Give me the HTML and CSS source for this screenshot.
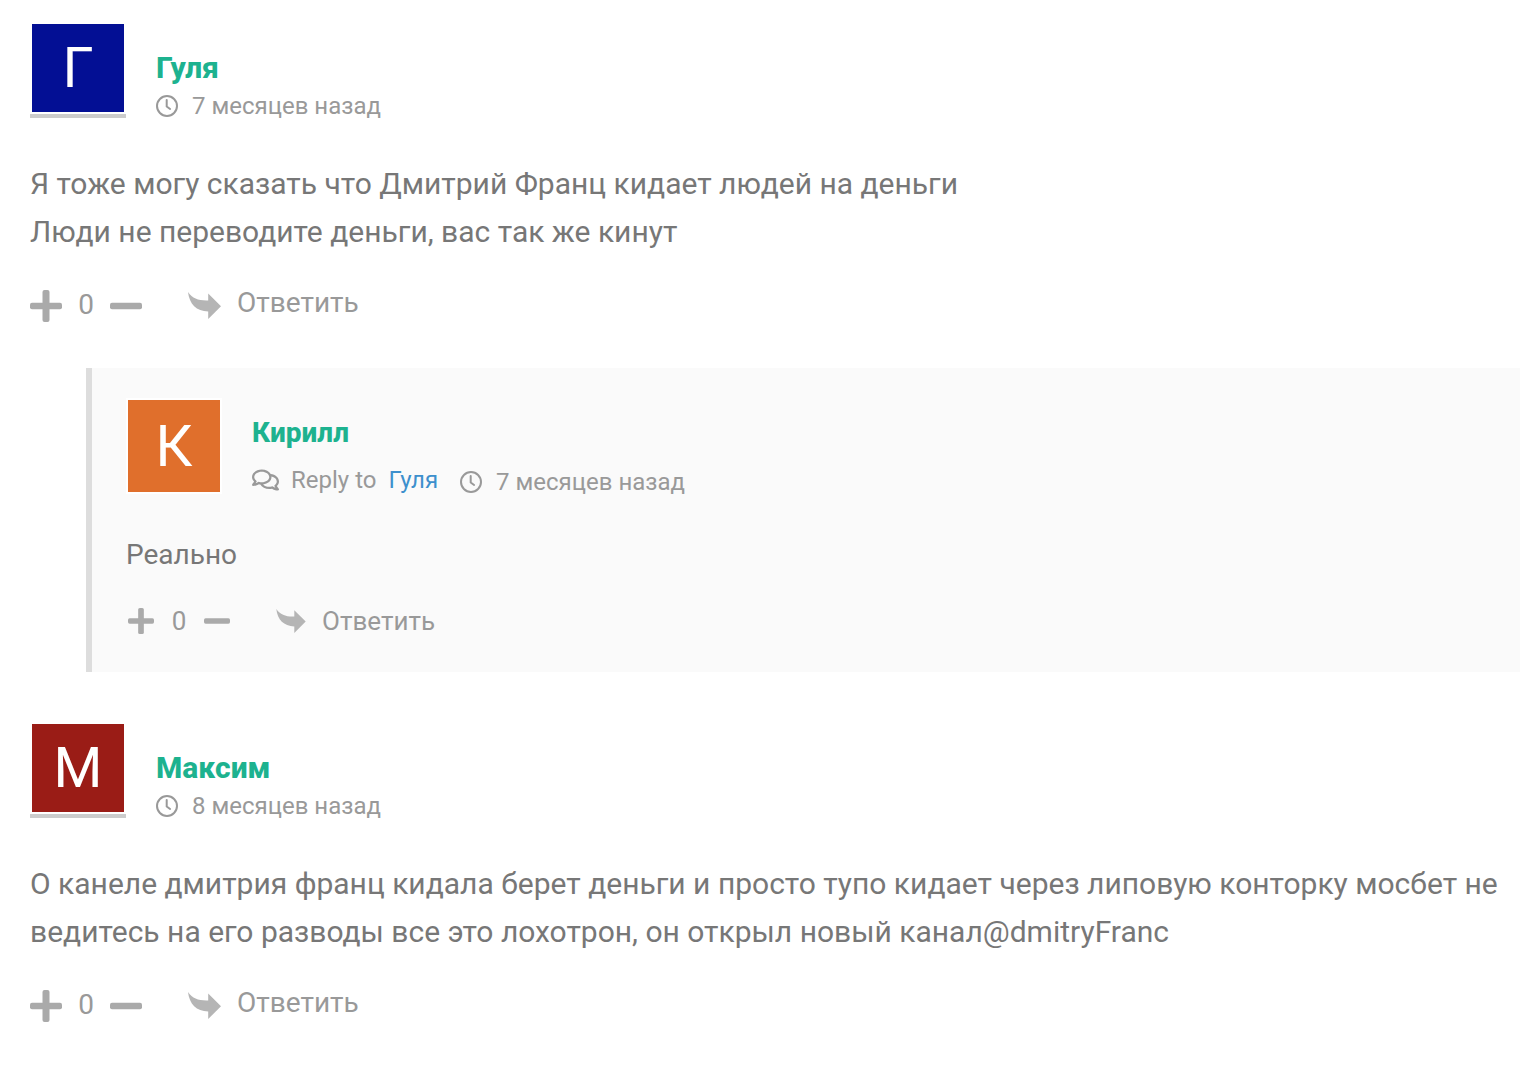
FILE: index.html
```html
<!DOCTYPE html>
<html lang="ru">
<head>
  <meta charset="UTF-8">
  <meta name="viewport" content="width=device-width, initial-scale=1.0">
  <title>Комментарии</title>
  <link rel="stylesheet" href="styles.css">
</head>
<body>
  <!-- Иконки -->
  <svg class="sprite" aria-hidden="true">
    <symbol id="clock" viewBox="0 0 22 22">
      <circle cx="11" cy="11" r="10" fill="none" stroke="currentColor" stroke-width="2"/>
      <path d="M10.700 5v6.500l3.400 2.500" fill="none" stroke="currentColor" stroke-width="2" stroke-linecap="round" stroke-linejoin="round"/>
    </symbol>
    <symbol id="talk" viewBox="0 32 576 448">
      <path d="M532 386.2c27.5-27.1 44-61.1 44-98.2 0-80-76.5-146.1-176.2-157.9C368.3 72.5 294.3 32 208 32 93.1 32 0 103.6 0 192c0 37 16.5 71 44 98.2-15.3 30.7-37.3 54.5-37.7 54.9-6.3 6.7-8.1 16.5-4.4 25 3.6 8.5 12 14 21.2 14 53.5 0 96.7-20.2 125.2-38.8 9.2 2.1 18.7 3.7 28.4 4.9C208.1 407.6 281.8 448 368 448c20.8 0 40.8-2.4 59.8-6.8C456.3 459.7 499.4 480 553 480c9.2 0 17.5-5.5 21.2-14 3.6-8.5 1.9-18.3-4.4-25-.4-.3-22.5-24.1-37.8-54.8zm-392.8-92.3L122.1 305c-14.1 9.1-28.5 16.3-43.1 21.4 2.7-4.7 5.4-9.7 8-14.8l15.5-31.1L77.7 256C64.2 242.6 48 220.7 48 192c0-60.7 73.3-112 160-112s160 51.3 160 112-73.3 112-160 112c-16.5 0-33-1.9-49-5.6l-19.8-4.5zM498.3 352l-24.7 24.4 15.5 31.1c2.6 5.1 5.3 10.1 8 14.8-14.6-5.1-29-12.3-43.1-21.4l-17.1-11.1-19.9 4.6c-16 3.7-32.5 5.6-49 5.6-54 0-102.2-20.1-131.3-49.7C338 339.5 416 272.9 416 192c0-3.4-.4-6.7-.7-10C479.7 196.5 528 238.8 528 288c0 28.7-16.2 50.6-29.7 64z"/>
    </symbol>
    <symbol id="plus" viewBox="0 0 32 32">
      <rect y="12.7" width="32" height="6.6" rx="2"/>
      <rect x="12.5" width="7" height="32" rx="2"/>
    </symbol>
    <symbol id="minus" viewBox="0 0 32 32">
      <rect y="12.7" width="32" height="6.6" rx="2"/>
    </symbol>
    <symbol id="arrow" viewBox="0 0 98 80">
      <path d="M0 0c14 20 32 26 60 25V4l38 38-38 38V58C25 57 4 36 0 0z"/>
    </symbol>
  </svg>

  <main class="comments">
    <article class="comment">
      <header class="comment-head">
        <div class="avatar"><span class="avatar-letter blue">Г</span></div>
        <div class="info">
          <h3 class="author">Гуля</h3>
          <div class="meta">
            <span class="date"><svg class="icon-clock"><use href="#clock"/></svg>7 месяцев назад</span>
          </div>
        </div>
      </header>
      <p class="text">Я тоже могу сказать что Дмитрий Франц кидает людей на деньги<br>Люди не переводите деньги, вас так же кинут</p>
      <footer class="actions">
        <button class="vote" type="button" aria-label="Плюс"><svg><use href="#plus"/></svg></button>
        <span class="count">0</span>
        <button class="vote" type="button" aria-label="Минус"><svg><use href="#minus"/></svg></button>
        <button class="answer" type="button"><svg><use href="#arrow"/></svg>Ответить</button>
      </footer>
    </article>

    <article class="comment reply">
      <header class="comment-head">
        <div class="avatar"><span class="avatar-letter orange">К</span></div>
        <div class="info">
          <h3 class="author">Кирилл</h3>
          <div class="meta">
            <span class="reply-to"><svg class="icon-talk"><use href="#talk"/></svg>Reply to <a href="#">Гуля</a></span>
            <span class="date"><svg class="icon-clock"><use href="#clock"/></svg>7 месяцев назад</span>
          </div>
        </div>
      </header>
      <p class="text">Реально</p>
      <footer class="actions">
        <button class="vote" type="button" aria-label="Плюс"><svg><use href="#plus"/></svg></button>
        <span class="count">0</span>
        <button class="vote" type="button" aria-label="Минус"><svg><use href="#minus"/></svg></button>
        <button class="answer" type="button"><svg><use href="#arrow"/></svg>Ответить</button>
      </footer>
    </article>

    <article class="comment">
      <header class="comment-head">
        <div class="avatar"><span class="avatar-letter red">М</span></div>
        <div class="info">
          <h3 class="author">Максим</h3>
          <div class="meta">
            <span class="date"><svg class="icon-clock"><use href="#clock"/></svg>8 месяцев назад</span>
          </div>
        </div>
      </header>
      <p class="text">О канеле дмитрия франц кидала берет деньги и просто тупо кидает через липовую конторку мосбет не ведитесь на его разводы все это лохотрон, он открыл новый канал@dmitryFranc</p>
      <footer class="actions">
        <button class="vote" type="button" aria-label="Плюс"><svg><use href="#plus"/></svg></button>
        <span class="count">0</span>
        <button class="vote" type="button" aria-label="Минус"><svg><use href="#minus"/></svg></button>
        <button class="answer" type="button"><svg><use href="#arrow"/></svg>Ответить</button>
      </footer>
    </article>
  </main>
</body>
</html>
```

FILE: styles.css
```css
* {
  box-sizing: border-box;
}
body {
  margin: 0;
  background: #fff;
  color: #777;
  font-family: Roboto, sans-serif;
  font-size: 30px;
  line-height: 48px;
}
svg {
  display: block;
  fill: currentColor;
  flex: none;
}
.sprite {
  display: none;
}
.comments {
  padding: 22px 6px 22px 30px;
}
.comment-head {
  display: flex;
  gap: 30px;
  height: 96px;
}
.avatar {
  display: flex;
  flex: none;
  width: 96px;
  padding: 2px;
  background: #fff;
  border-bottom: 4px solid #ccc;
}
.avatar-letter {
  display: flex;
  flex: 1;
  align-items: center;
  justify-content: center;
  color: #fff;
  font-size: 56px;
  line-height: 64px;
}
.blue {
  background: #030f94;
}
.orange {
  background: #e06f2c;
}
.red {
  background: #9a1c16;
}
.info {
  padding-top: 26px;
}
.author {
  margin: 0;
  color: #1db28f;
  font-size: 30px;
  font-weight: 800;
  line-height: 40px;
}
.meta {
  display: flex;
  align-items: flex-start;
  gap: 22px;
  color: #999;
  font-size: 24px;
  line-height: 36px;
}
.date,
.reply-to {
  display: flex;
  align-items: center;
}
.icon-clock {
  width: 22px;
  height: 22px;
  margin-right: 14px;
}
.icon-talk {
  width: 27px;
  height: 22px;
  margin-right: 12px;
}
.reply-to a {
  margin-left: 12px;
  color: #3d90cd;
  text-decoration: none;
}
.text {
  margin: 42px 0 0;
}
.actions {
  display: flex;
  align-items: center;
  margin-top: 30px;
  height: 40px;
  color: #999;
  font-size: 28px;
  line-height: 40px;
}
button {
  padding: 0;
  border: 0;
  background: none;
  color: inherit;
  font: inherit;
  cursor: pointer;
}
.vote svg {
  width: 32px;
  height: 32px;
  fill: #aaa;
}
.count {
  width: 48px;
  padding-bottom: 2px;
  text-align: center;
}
.answer {
  display: flex;
  align-items: center;
  margin-left: 46px;
  padding-bottom: 6px;
}
.answer svg {
  width: 33px;
  height: 27px;
  margin-top: 4px;
  margin-right: 16px;
  fill: #b5b5b5;
}

/* Ответ на комментарий */
.reply {
  margin: 42px 0 50px 56px;
  padding: 30px 0 30px 34px;
  background: #fafafa;
  border-left: 6px solid #ddd;
}
.reply .avatar {
  border-bottom: 0;
}
.reply .avatar-letter {
  font-size: 58px;
}
.reply .info {
  padding-top: 15px;
}
.reply .author {
  font-size: 28px;
}
.reply .meta {
  margin-top: 9px;
}
.reply .date {
  padding-top: 2px;
}
.reply .text {
  margin-top: 37px;
  font-size: 28px;
}
.reply .actions {
  margin-top: 22px;
  margin-bottom: 1px;
  padding-left: 2px;
  font-size: 26px;
}
.reply .vote svg {
  width: 26px;
  height: 26px;
}
.reply .count {
  width: 50px;
  padding: 0;
}
.reply .answer {
  padding: 0;
}
.reply .answer svg {
  width: 30px;
  height: 24px;
  margin-top: 0;
}
```
